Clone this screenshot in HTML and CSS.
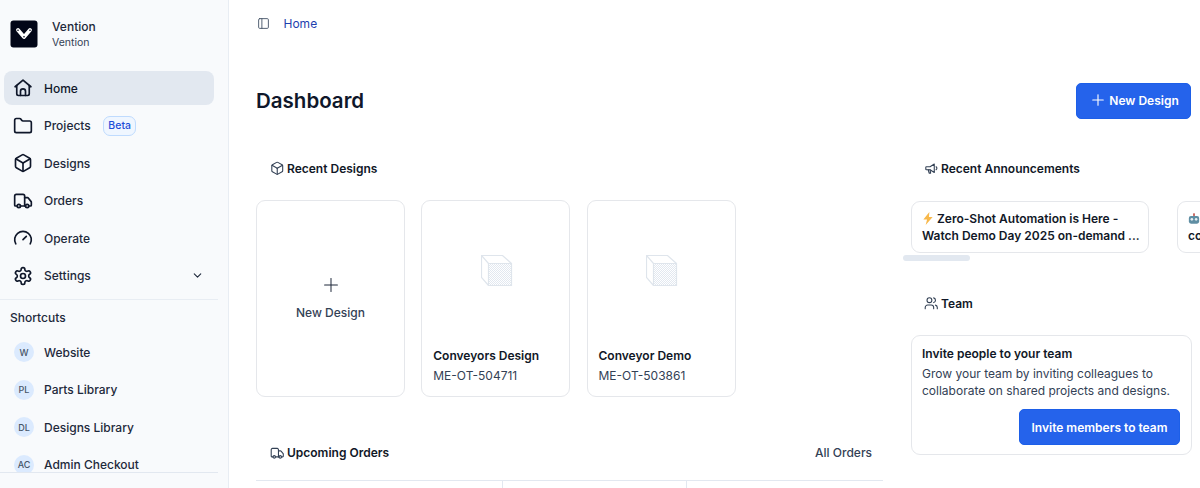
FILE: index.html
```html
<!DOCTYPE html>
<html lang="en">
<head>
<meta charset="utf-8">
<title>Dashboard</title>
<link rel="stylesheet" href="styles.css">
</head>
<body>
<div class="app">
  <aside class="sidebar">
    <div class="brand">
      <svg class="logo" viewBox="0 0 28 28"><rect x=".5" y=".5" width="27" height="27" rx="3" fill="#020617"/><path d="M8 10 14 17 20 10" fill="none" stroke="#fff" stroke-width="3.800" stroke-linecap="round" stroke-linejoin="round"/><circle cx="8" cy="10.200" r=".8" fill="#020617"/><circle cx="14" cy="16.800" r=".8" fill="#020617"/><circle cx="20" cy="10.200" r=".8" fill="#020617"/></svg>
      <div class="brand-text"><div class="brand-name">Vention</div><div class="brand-sub">Vention</div></div>
    </div>
    <nav class="nav">
      <a class="nav-item active"><svg class="nav-icon" viewBox="0 0 24 24"><path d="M2.500 10.500 12 2.500l9.500 8"/><path d="M4.500 9v10a2 2 0 0 0 2 2h11a2 2 0 0 0 2-2V9"/><path d="M9 21v-5a3 3 0 0 1 6 0v5"/></svg><span>Home</span></a>
      <a class="nav-item"><svg class="nav-icon" viewBox="0 0 24 24"><path d="M20 20a2 2 0 0 0 2-2V8a2 2 0 0 0-2-2h-7.900a2 2 0 0 1-1.700-.900l-.800-1.200A2 2 0 0 0 7.900 3H4a2 2 0 0 0-2 2v13a2 2 0 0 0 2 2Z"/></svg><span>Projects</span><span class="badge">Beta</span></a>
      <a class="nav-item"><svg class="nav-icon" viewBox="0 0 24 24"><path d="M21 8a2 2 0 0 0-1-1.730l-7-4a2 2 0 0 0-2 0l-7 4A2 2 0 0 0 3 8v8a2 2 0 0 0 1 1.730l7 4a2 2 0 0 0 2 0l7-4A2 2 0 0 0 21 16Z"/><path d="m3.300 7 8.700 5 8.700-5"/><path d="M12 22V12"/></svg><span>Designs</span></a>
      <a class="nav-item"><svg class="nav-icon" viewBox="0 0 24 24"><path d="M14 18V6a2 2 0 0 0-2-2H4a2 2 0 0 0-2 2v11a1 1 0 0 0 1 1h2"/><path d="M15 18H9"/><path d="M19 18h2a1 1 0 0 0 1-1v-3.650a1 1 0 0 0-.220-.620l-3.480-4.350A1 1 0 0 0 17.520 8H14"/><circle cx="17" cy="18" r="2"/><circle cx="7" cy="18" r="2"/></svg><span>Orders</span></a>
      <a class="nav-item"><svg class="nav-icon" viewBox="0 0 24 24"><path d="m12 14 4-4"/><path d="M3.340 19a10 10 0 1 1 17.320 0"/></svg><span>Operate</span></a>
      <a class="nav-item"><svg class="nav-icon" viewBox="0 0 24 24"><path d="M12.220 2h-.440a2 2 0 0 0-2 2v.180a2 2 0 0 1-1 1.730l-.430.250a2 2 0 0 1-2 0l-.150-.080a2 2 0 0 0-2.730.730l-.220.380a2 2 0 0 0 .730 2.730l.150.100a2 2 0 0 1 1 1.720v.510a2 2 0 0 1-1 1.740l-.150.090a2 2 0 0 0-.730 2.730l.220.380a2 2 0 0 0 2.730.730l.150-.080a2 2 0 0 1 2 0l.430.250a2 2 0 0 1 1 1.730V20a2 2 0 0 0 2 2h.440a2 2 0 0 0 2-2v-.180a2 2 0 0 1 1-1.730l.430-.250a2 2 0 0 1 2 0l.150.080a2 2 0 0 0 2.730-.730l.220-.390a2 2 0 0 0-.730-2.730l-.150-.080a2 2 0 0 1-1-1.740v-.500a2 2 0 0 1 1-1.740l.150-.090a2 2 0 0 0 .730-2.730l-.220-.380a2 2 0 0 0-2.730-.730l-.150.080a2 2 0 0 1-2 0l-.430-.250a2 2 0 0 1-1-1.730V4a2 2 0 0 0-2-2Z"/><circle cx="12" cy="12" r="3"/></svg><span class="grow">Settings</span><svg class="chevron" viewBox="0 0 24 24"><path d="m6 9 6 6 6-6"/></svg></a>
    </nav>
    <div class="shortcuts">
      <div class="shortcuts-title">Shortcuts</div>
      <a class="shortcut"><span class="avatar">W</span><span>Website</span></a>
      <a class="shortcut"><span class="avatar">PL</span><span>Parts Library</span></a>
      <a class="shortcut"><span class="avatar">DL</span><span>Designs Library</span></a>
      <a class="shortcut"><span class="avatar">AC</span><span>Admin Checkout</span></a>
    </div>
    <div class="sidebar-foot"></div>
  </aside>

  <main class="main">
    <div class="crumbs">
      <svg class="panel-icon" viewBox="0 0 24 24"><rect x="3" y="3" width="18" height="18" rx="2"/><path d="M9 3v18"/></svg>
      <a class="crumb">Home</a>
    </div>
    <div class="title-row">
      <h1>Dashboard</h1>
      <button class="btn btn-new"><svg class="plus" viewBox="0 0 24 24"><path d="M5 12h14"/><path d="M12 5v14"/></svg>New Design</button>
    </div>
    <div class="columns">
      <section class="left">
        <h2 class="heading"><svg class="head-icon" viewBox="0 0 24 24"><path d="M21 8a2 2 0 0 0-1-1.730l-7-4a2 2 0 0 0-2 0l-7 4A2 2 0 0 0 3 8v8a2 2 0 0 0 1 1.730l7 4a2 2 0 0 0 2 0l7-4A2 2 0 0 0 21 16Z"/><path d="m3.300 7 8.700 5 8.700-5"/><path d="M12 22V12"/></svg>Recent Designs</h2>
        <div class="cards">
          <div class="card card-new">
            <svg class="card-plus" viewBox="0 0 24 24"><path d="M5 12h14"/><path d="M12 5v14"/></svg>
            <div class="card-new-label">New Design</div>
          </div>
          <div class="card">
            <div class="thumb"><svg class="cube" viewBox="0 0 32 32"><defs><pattern id="dots" width="2" height="2" patternUnits="userSpaceOnUse"><rect width="1" height="1" fill="#e2e8f0"/><rect x="1" y="1" width="1" height="1" fill="#e2e8f0"/></pattern></defs><rect x="8" y="8.500" width="22.500" height="22" fill="url(#dots)"/><path d="M7.500 8.500h23v22h-23zM7.500 8.500 .5 .5h21l9 8M.5 .5v22l7 8" fill="none" stroke="#dfe5ec" stroke-width="1.200"/></svg></div>
            <div class="card-name">Conveyors Design</div>
            <div class="card-id">ME-OT-504711</div>
          </div>
          <div class="card">
            <div class="thumb"><svg class="cube" viewBox="0 0 32 32"><rect x="8" y="8.500" width="22.500" height="22" fill="url(#dots)"/><path d="M7.500 8.500h23v22h-23zM7.500 8.500 .5 .5h21l9 8M.5 .5v22l7 8" fill="none" stroke="#dfe5ec" stroke-width="1.200"/></svg></div>
            <div class="card-name">Conveyor Demo</div>
            <div class="card-id">ME-OT-503861</div>
          </div>
        </div>
        <div class="orders-head">
          <h2 class="heading"><svg class="head-icon" viewBox="0 0 24 24"><path d="M14 18V6a2 2 0 0 0-2-2H4a2 2 0 0 0-2 2v11a1 1 0 0 0 1 1h2"/><path d="M15 18H9"/><path d="M19 18h2a1 1 0 0 0 1-1v-3.650a1 1 0 0 0-.220-.620l-3.480-4.350A1 1 0 0 0 17.520 8H14"/><circle cx="17" cy="18" r="2"/><circle cx="7" cy="18" r="2"/></svg>Upcoming Orders</h2>
          <a class="all-orders">All Orders</a>
        </div>
        <div class="table-head"><div class="col-a"></div><div class="col-b"></div><div class="col-c"></div></div>
      </section>
      <section class="right">
        <h2 class="heading heading-right"><svg class="head-icon" viewBox="0 0 24 24"><path d="M4 9.500h6L17 5v14l-7-4.500H4a1 1 0 0 1-1-1v-3a1 1 0 0 1 1-1Z"/><path d="M7 14.500 8.500 20H11l-1-5.500"/><path d="M20 9.500a3 3 0 0 1 0 5"/></svg>Recent Announcements</h2>
        <div class="carousel">
          <div class="announce"><svg class="emoji" viewBox="0 0 12 14"><path d="M7.500 0 1 8h4l-1.500 6L11 5.500H7z" fill="#f8b84a"/></svg> Zero-Shot Automation is Here - Watch Demo Day 2025 on-demand ...</div>
          <div class="announce"><svg class="emoji" viewBox="0 0 14 14"><rect x="1" y="4" width="12" height="9" rx="2.500" fill="#5f8ea3"/><circle cx="4.500" cy="8" r="1.500" fill="#e8eef2"/><circle cx="9.500" cy="8" r="1.500" fill="#e8eef2"/><rect x="6" y="1" width="2" height="3" fill="#c2544d"/></svg> Automate<br>collaboration</div>
        </div>
        <div class="scrollbar"></div>
        <h2 class="heading heading-right heading-team"><svg class="head-icon" viewBox="0 0 24 24"><path d="M16 21v-2a4 4 0 0 0-4-4H6a4 4 0 0 0-4 4v2"/><circle cx="9" cy="7" r="4"/><path d="M22 21v-2a4 4 0 0 0-3-3.870"/><path d="M16 3.130a4 4 0 0 1 0 7.750"/></svg>Team</h2>
        <div class="invite">
          <div class="invite-title">Invite people to your team</div>
          <p class="invite-text">Grow your team by inviting colleagues to collaborate on shared projects and designs.</p>
          <div class="invite-actions"><button class="btn btn-invite">Invite members to team</button></div>
        </div>
      </section>
    </div>
  </main>
</div>
</body>
</html>
```
FILE: styles.css
```css
* { box-sizing: border-box; }
html, body { margin: 0; height: 100%; overflow: hidden; }
body { font-family: Inter, "Liberation Sans", sans-serif; color: #0f172a; background: #fff; }
.app { display: flex; width: 1200px; height: 488px; overflow: hidden; }

.sidebar { width: 229px; flex: none; height: 488px; background: #f8fafc; border-right: 1px solid #e8edf3; position: relative; overflow: hidden; }
.brand { display: flex; gap: 14px; padding: 20px 0 0 10px; height: 71px; align-items: flex-start; }
.logo { width: 28px; height: 28px; flex: none; }
.brand-name { font-size: 12px; font-weight: 500; line-height: 14px; color: #1e293b; }
.brand-sub { font-size: 10.500px; line-height: 14px; margin-top: 2px; color: #334155; }

.nav { padding: 0 14px 0 4px; }
.nav-item { display: flex; align-items: center; height: 34px; margin-bottom: 3.500px; padding-left: 9px; border-radius: 8px; font-size: 12px; font-weight: 500; color: #1e293b; }
.nav-item.active { background: #e2e8f0; color: #0f172a; }
.nav-icon { width: 20px; height: 20px; margin-right: 11px; flex: none; fill: none; stroke: #0f172a; stroke-width: 2; stroke-linecap: round; stroke-linejoin: round; }
.grow { flex: 1; }
.badge { margin-left: 12px; height: 20px; padding: 0 4.500px; display: flex; align-items: center; border: 1px solid #bfdbfe; border-radius: 7px; background: #eff6ff; color: #1d4ed8; font-size: 10.500px; font-weight: 500; }
.chevron { width: 13px; height: 13px; margin-right: 10px; fill: none; stroke: #1e293b; stroke-width: 2; stroke-linecap: round; stroke-linejoin: round; }

.shortcuts { margin-top: 6px; width: 218px; border-top: 1px solid #e8edf3; padding-top: 11px; }
.shortcuts-title { padding-left: 10px; font-size: 12px; font-weight: 500; line-height: 14px; color: #1e293b; margin-bottom: 9px; }
.shortcut { display: flex; align-items: center; height: 37.500px; padding-left: 14px; font-size: 12px; font-weight: 500; color: #1e293b; }
.avatar { width: 20px; height: 20px; margin-right: 10px; flex: none; border-radius: 50%; background: #dbeafe; color: #475569; font-size: 9px; font-weight: 500; display: flex; align-items: center; justify-content: center; }
.sidebar-foot { position: absolute; left: 0; bottom: 0; width: 218px; height: 16px; background: #f8fafc; border-top: 1px solid #e2e8f0; }

.main { flex: 1; min-width: 0; padding: 0 9px 0 27px; overflow: hidden; }
.crumbs { display: flex; align-items: center; height: 46px; }
.panel-icon { width: 13px; height: 13px; margin-right: 13.500px; margin-left: 1px; fill: none; stroke: #475569; stroke-width: 1.700; stroke-linecap: round; stroke-linejoin: round; }
.crumb { font-size: 12px; color: #1e3fae; }
.title-row { display: flex; justify-content: space-between; align-items: center; margin-top: 37px; height: 36px; }
h1 { margin: 0; font-size: 20.500px; line-height: 36px; font-weight: 600; color: #0f172a; }
.btn { border: 1px solid #1d5fe8; border-radius: 5px; background: #2563eb; color: #fff; font-family: inherit; font-size: 12px; font-weight: 600; display: flex; align-items: center; justify-content: center; padding: 0; }
.btn-new { width: 115px; height: 36px; padding: 0 0 2px 1px; }
.plus { width: 18px; height: 18px; margin-right: 2px; fill: none; stroke: #fff; stroke-width: 1.500; stroke-linecap: round; }

.columns { display: flex; margin-top: 40px; }
.left { width: 627px; flex: none; }
.right { margin-left: 20px; flex: 1; min-width: 0; }
.heading { display: flex; align-items: center; margin: 0; height: 18px; padding-left: 14px; font-size: 12px; line-height: 18px; font-weight: 600; color: #111827; }
.left > .heading, .right > .heading { padding-top: 1px; }
.head-icon { width: 14.500px; height: 14.500px; margin-right: 2.500px; flex: none; fill: none; stroke: #334155; stroke-width: 1.800; stroke-linecap: round; stroke-linejoin: round; }

.cards { display: flex; gap: 16.250px; margin-top: 23px; }
.card { width: 149px; height: 197px; border: 1px solid #e5e7eb; border-radius: 9px; background: #fff; padding: 0 11px; display: flex; flex-direction: column; }
.card-new { align-items: center; justify-content: center; }
.card-plus { width: 22px; height: 22px; margin-top: -2.500px; fill: none; stroke: #1e293b; stroke-width: 1.100; stroke-linecap: round; }
.card-new-label { margin-top: 9.500px; font-size: 12px; font-weight: 500; color: #334155; line-height: 16px; }
.thumb { height: 147px; display: flex; align-items: flex-start; justify-content: center; padding-top: 54px; }
.cube { width: 32px; height: 32px; margin-left: 2px; }
.card-name { font-size: 12px; font-weight: 600; line-height: 16px; color: #111827; }
.card-id { margin-top: 4px; font-size: 12px; line-height: 16px; color: #334155; }

.orders-head { display: flex; justify-content: space-between; align-items: center; margin-top: 47px; height: 18px; padding-right: 11px; }
.all-orders { font-size: 12px; font-weight: 500; color: #334155; margin-bottom: 2px; }
.table-head { display: flex; margin-top: 18px; height: 20px; border-top: 1px solid #e2e8f0; }
.col-a { width: 247px; border-right: 1px solid #e2e8f0; }
.col-b { width: 184px; border-right: 1px solid #e2e8f0; }

.heading-right { padding-left: 21px; }
.carousel { display: flex; gap: 28px; margin: 24px 0 0 8px; width: 289px; overflow: hidden; }
.announce { width: 238px; height: 52px; flex: none; border: 1px solid #e5e7eb; border-radius: 9px; padding: 8px 6px 0 10px; font-size: 12px; line-height: 17px; font-weight: 600; color: #111827; background: #fff; }
.emoji { width: 12px; height: 13px; vertical-align: -2px; }
.scrollbar { width: 67px; height: 6px; margin-top: 2px; border-radius: 3px; background: #e2e8f0; }
.heading-team { margin-top: 33px; }
.invite { width: 281px; height: 120px; margin: 23px 0 0 8px; border: 1px solid #e5e7eb; border-radius: 9px; padding: 10px 11px 0 10px; background: #fff; }
.invite-title { font-size: 12px; line-height: 16px; font-weight: 600; color: #111827; }
.invite-text { margin: 3px 0 0; font-size: 12px; line-height: 17px; color: #334155; }
.invite-actions { display: flex; justify-content: flex-end; margin-top: 10px; }
.btn-invite { width: 161px; height: 36px; }
```
